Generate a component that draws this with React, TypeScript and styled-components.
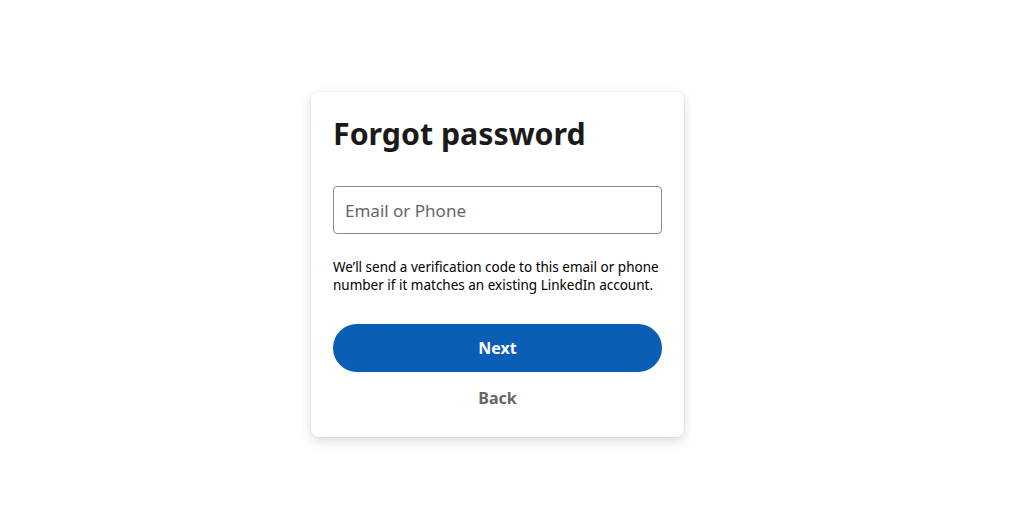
import React from 'react'
import styled, { createGlobalStyle } from 'styled-components'

const GlobalStyle = createGlobalStyle`
	html, body {
		margin: 0;
		padding: 0;
		background: #ffffff;
		font-family: "Noto Sans", "Open Sans", sans-serif;
	}
`

const Page = styled.div`
	display: flex;
	justify-content: center;
	align-items: flex-start;
	padding: 92px 29px 0 0;
	min-height: 510px;
	box-sizing: border-box;
`

const Card = styled.div`
	width: 373px;
	box-sizing: border-box;
	padding: 22px 22px 25px;
	background: #ffffff;
	border-radius: 8px;
	box-shadow: 0 0 0 1px rgba(0, 0, 0, 0.03), 0 4px 12px rgba(0, 0, 0, 0.15);
	display: flex;
	flex-direction: column;
`

const Title = styled.h1`
	margin: 0;
	font-size: 30.3px;
	line-height: 40px;
	font-weight: 700;
	color: #1a1a1a;
`

const Input = styled.input`
	margin-top: 32px;
	height: 48px;
	box-sizing: border-box;
	border: 1px solid #8c8c8c;
	border-radius: 4px;
	padding: 0 11px;
	font-family: inherit;
	font-size: 17px;
	color: #000;
	outline: none;
	&::placeholder {
		color: #666666;
	}
`

const Hint = styled.p`
	margin: 24px 0 0;
	font-size: 13.5px;
	line-height: 18px;
	color: #000000;
`

const PrimaryButton = styled.button`
	margin-top: 30px;
	height: 48px;
	border: none;
	border-radius: 24px;
	background: #0a5eb5;
	color: #ffffff;
	font-family: inherit;
	font-size: 16px;
	font-weight: 700;
	cursor: pointer;
`

const LinkButton = styled.button`
	margin-top: 12px;
	height: 28px;
	align-self: center;
	border: none;
	background: none;
	color: #666666;
	font-family: inherit;
	font-size: 16px;
	font-weight: 700;
	cursor: pointer;
`

const App = () => (
	<>
		<GlobalStyle />
		<Page>
			<Card>
				<Title>Forgot password</Title>
				<Input placeholder="Email or Phone" />
				<Hint>
					We’ll send a verification code to this email or phone number if it matches an existing LinkedIn account.
				</Hint>
				<PrimaryButton>Next</PrimaryButton>
				<LinkButton>Back</LinkButton>
			</Card>
		</Page>
	</>
)

export default App
